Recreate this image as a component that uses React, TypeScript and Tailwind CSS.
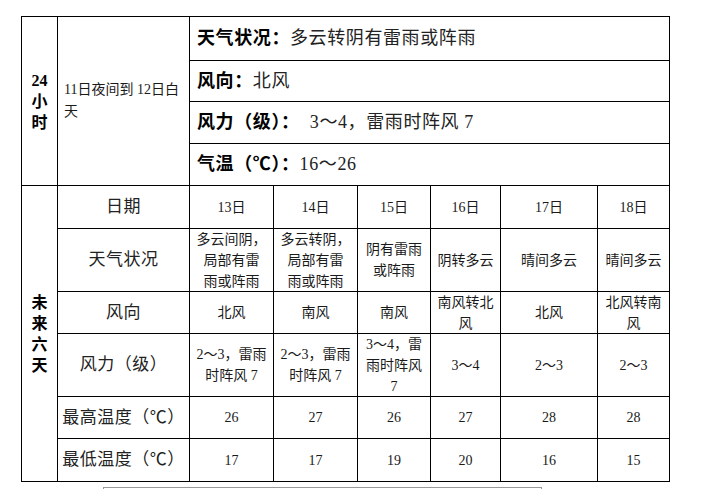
import React from "react";

type Day = {
  date: string;
  weather: string[];
  wind: string[];
  force: string[];
  hi: string;
  lo: string;
};

const days: Day[] = [
  { date: "13日", weather: ["多云间阴，", "局部有雷", "雨或阵雨"], wind: ["北风"], force: ["2～3，雷雨", "时阵风 7"], hi: "26", lo: "17" },
  { date: "14日", weather: ["多云转阴，", "局部有雷", "雨或阵雨"], wind: ["南风"], force: ["2～3，雷雨", "时阵风 7"], hi: "27", lo: "17" },
  { date: "15日", weather: ["阴有雷雨", "或阵雨"], wind: ["南风"], force: ["3～4，雷", "雨时阵风", "7"], hi: "26", lo: "19" },
  { date: "16日", weather: ["阴转多云"], wind: ["南风转北", "风"], force: ["3～4"], hi: "27", lo: "20" },
  { date: "17日", weather: ["晴间多云"], wind: ["北风"], force: ["2～3"], hi: "28", lo: "16" },
  { date: "18日", weather: ["晴间多云"], wind: ["北风转南", "风"], force: ["2～3"], hi: "28", lo: "15" },
];

const rows: { label: string; get: (d: Day) => string[] }[] = [
  { label: "日期", get: (d) => [d.date] },
  { label: "天气状况", get: (d) => d.weather },
  { label: "风向", get: (d) => d.wind },
  { label: "风力（级）", get: (d) => d.force },
  { label: "最高温度（℃）", get: (d) => [d.hi] },
  { label: "最低温度（℃）", get: (d) => [d.lo] },
];

const today = [
  { label: "天气状况：", value: "多云转阴有雷雨或阵雨" },
  { label: "风向：", value: "北风" },
  { label: "风力（级）：", value: "  3～4，雷雨时阵风 7" },
  { label: "气温（℃）：", value: "16～26" },
];

function Lines({ lines }: { lines: string[] }) {
  return (
    <div className="leading-[21px]">
      {lines.map((l, i) => (
        <div key={i} className="whitespace-pre">
          {l}
        </div>
      ))}
    </div>
  );
}

export default function App() {
  return (
    <div
      className="min-h-screen bg-white pt-[16px] pl-[21px] text-[#1a1a1a]"
      style={{ fontFamily: '"Liberation Serif", "Noto Sans CJK SC", serif' }}
    >
      <div className="grid w-[649px] grid-cols-[35px_131px_83px_83px_72px_69px_96px_71px] grid-rows-[43px_40px_41px_41px_42px_62px_41px_62px_41px_42px] gap-px bg-black p-px">
        {/* 24 hours */}
        <div className="row-span-4 flex items-center justify-center bg-white text-center text-[16px] font-bold leading-[21px] text-black">
          <div>
            24
            <br />小<br />时
          </div>
        </div>
        <div className="row-span-4 flex items-center bg-white pl-[6px] text-[14px] leading-[22px]">
          <div>
            11日夜间到 12日白
            <br />天
          </div>
        </div>
        {today.map((t) => (
          <div key={t.label} className="col-span-6 flex items-center bg-white pl-[7px] text-[18px] tracking-[0.6px] whitespace-pre">
            <span className="font-bold text-black">{t.label}</span>
            <span className="text-[#222]">{t.value}</span>
          </div>
        ))}

        {/* six days */}
        <div className="row-span-6 flex items-center justify-center bg-white text-center text-[16px] font-bold leading-[21px] text-black">
          <div>
            未<br />来<br />六<br />天
          </div>
        </div>
        {rows.map((r) => (
          <React.Fragment key={r.label}>
            <div className="flex items-center justify-center bg-white text-[17px] tracking-[0.5px] text-[#222]">
              {r.label}
            </div>
            {days.map((d) => (
              <div key={d.date} className="flex items-center justify-center bg-white text-center text-[14px]">
                <Lines lines={r.get(d)} />
              </div>
            ))}
          </React.Fragment>
        ))}
      </div>
      <div className="mt-[5px] ml-[82px] h-[10px] w-[439px] border border-b-0 border-[#999]" />
    </div>
  );
}
